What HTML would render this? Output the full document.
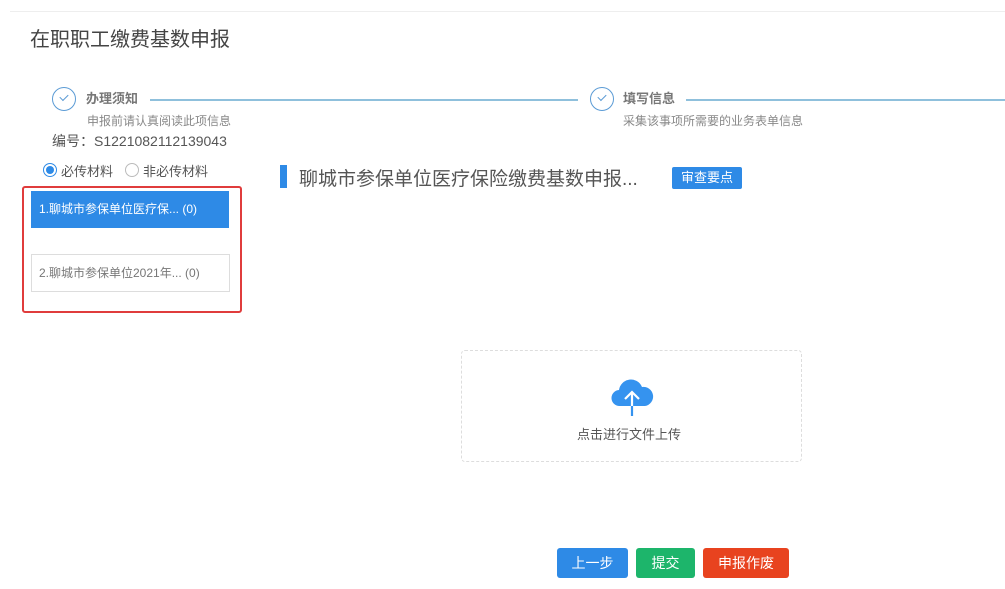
<!DOCTYPE html>
<html><head><meta charset="utf-8"><style>
body{margin:0;width:1005px;height:589px;background:#fff;position:relative;overflow:hidden;font-family:"Liberation Sans","Noto Sans CJK SC",sans-serif;color:#333}
.a{position:absolute;white-space:nowrap}
.c{position:absolute;width:24px;height:24px;border:1.5px solid #5b9bd5;border-radius:50%;box-sizing:border-box}
.c:after{content:"";position:absolute;left:7px;top:6px;width:7px;height:4px;border-left:1.5px solid #5b9bd5;border-bottom:1.5px solid #5b9bd5;transform:rotate(-45deg)}
.ln{position:absolute;height:1.5px;background:#8fc0dc}
.btn{position:absolute;color:#fff;font-size:14px;text-align:center;border-radius:3px;line-height:30px;top:548px;height:30px}
</style></head><body>
<div class="a" style="left:10px;right:0;top:11px;height:1px;background:#eee"></div>
<div class="a" style="left:30px;top:23px;font-size:20px;color:#444">在职职工缴费基数申报</div>
<div class="c" style="left:52px;top:87px"></div>
<div class="a" style="left:86px;top:88px;font-size:13px;font-weight:bold;color:#777">办理须知</div>
<div class="ln" style="left:150px;width:428px;top:99px"></div>
<div class="a" style="left:87px;top:112px;font-size:12px;color:#888">申报前请认真阅读此项信息</div>
<div class="c" style="left:590px;top:87px"></div>
<div class="a" style="left:623px;top:88px;font-size:13px;font-weight:bold;color:#777">填写信息</div>
<div class="ln" style="left:686px;right:0;top:99px"></div>
<div class="a" style="left:623px;top:112px;font-size:12px;color:#888">采集该事项所需要的业务表单信息</div>
<div class="a" style="left:52px;top:131px;font-size:14px;color:#555">编号：S1221082112139043</div>
<div class="a" style="left:43px;top:163px;width:14px;height:14px;border-radius:50%;border:1px solid #2e8ae6;box-sizing:border-box"><div style="position:absolute;left:2px;top:2px;width:8px;height:8px;border-radius:50%;background:#2e8ae6"></div></div>
<div class="a" style="left:61px;top:161px;font-size:13px;color:#555">必传材料</div>
<div class="a" style="left:125px;top:163px;width:14px;height:14px;border-radius:50%;border:1px solid #bbb;box-sizing:border-box"></div>
<div class="a" style="left:143px;top:161px;font-size:13px;color:#555">非必传材料</div>
<div class="a" style="left:22px;top:186px;width:220px;height:127px;border:2px solid #e03c3c;border-radius:3px;box-sizing:border-box"></div>
<div class="a" style="left:31px;top:191px;width:198px;height:37px;background:#2e8ae6;color:#fff;font-size:12px;line-height:37px;padding-left:8px;box-sizing:border-box">1.聊城市参保单位医疗保... (0)</div>
<div class="a" style="left:31px;top:254px;width:199px;height:38px;border:1px solid #ddd;color:#777;font-size:12px;line-height:36px;padding-left:7px;box-sizing:border-box">2.聊城市参保单位2021年... (0)</div>
<div class="a" style="left:280px;top:165px;width:7px;height:23px;background:#2e8ae6"></div>
<div class="a" style="left:299px;top:164px;font-size:19px;color:#555">聊城市参保单位医疗保险缴费基数申报...</div>
<div class="a" style="left:672px;top:167px;width:70px;height:22px;background:#2e8ae6;border-radius:2px;color:#fff;font-size:13px;text-align:center;line-height:22px">审查要点</div>
<div class="a" style="left:461px;top:350px;width:341px;height:112px;border:1px dashed #ddd;border-radius:4px;box-sizing:border-box"></div>
<svg class="a" style="left:608px;top:375px" width="48" height="42" viewBox="0 0 48 42"><path d="M12 31a8 8 0 0 1-1-16 12 12 0 0 1 23-3 9 9 0 0 1 3 19z" fill="#3593ef"/><path d="M24 40V18M17 24l7-7 7 7" stroke="#fff" stroke-width="2.2" fill="none"/><path d="M24 31v10" stroke="#3593ef" stroke-width="2.2"/></svg>
<div class="a" style="left:577px;top:424px;font-size:13px;color:#555">点击进行文件上传</div>
<div class="btn" style="left:557px;width:71px;background:#2e8ae6">上一步</div>
<div class="btn" style="left:636px;width:59px;background:#1db56b">提交</div>
<div class="btn" style="left:703px;width:86px;background:#e8431f">申报作废</div>
</body></html>
